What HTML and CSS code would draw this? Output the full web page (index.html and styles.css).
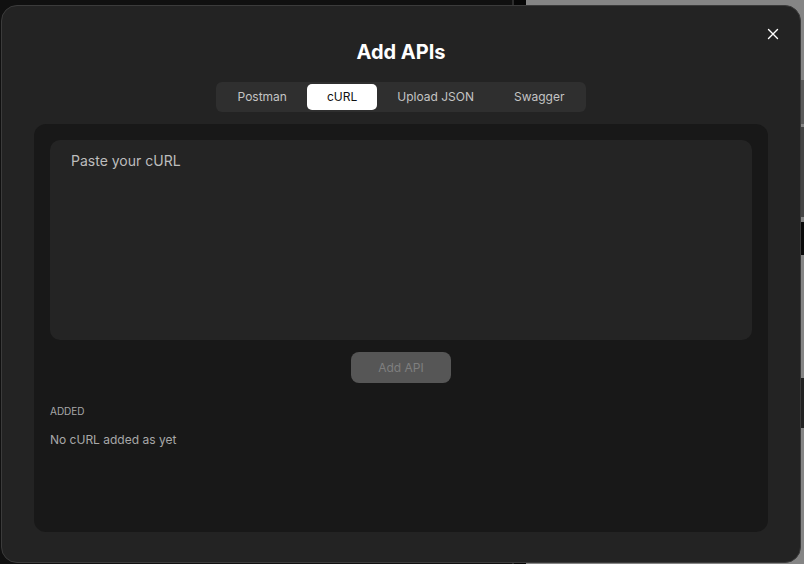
FILE: index.html
```html
<!DOCTYPE html>
<html>
<head>
<meta charset="utf-8">
<link rel="stylesheet" href="styles.css">
</head>
<body>
<div class="backdrop">
  <div class="bg-dark"></div>
  <div class="bg-line"></div>
  <div class="bg-black"></div>
  <div class="bg-grey">
    <div class="edge e1"></div>
    <div class="edge e2"></div>
    <div class="edge e3"></div>
    <div class="edge e4"></div>
  </div>
</div>
<div class="modal">
  <button class="close" aria-label="Close">
    <svg width="12" height="12" viewBox="0 0 12 12"><path d="M1.5 1.5 L10.5 10.5 M10.5 1.5 L1.5 10.5" stroke="#fff" stroke-width="1.4" stroke-linecap="round" fill="none"/></svg>
  </button>
  <h1 class="title">Add APIs</h1>
  <div class="tabs">
    <div class="tab">Postman</div>
    <div class="tab active">cURL</div>
    <div class="tab">Upload JSON</div>
    <div class="tab">Swagger</div>
  </div>
  <div class="panel">
    <div class="input">Paste your cURL</div>
    <div class="actions"><button class="add-btn">Add API</button></div>
    <div class="section-label">ADDED</div>
    <div class="empty">No cURL added as yet</div>
  </div>
</div>
</body>
</html>
```
FILE: styles.css
```css
html, body {
  margin: 0;
  padding: 0;
}
body {
  width: 804px;
  height: 564px;
  overflow: hidden;
  position: relative;
  font-family: Inter, "Noto Sans", sans-serif;
  background: #0e0e0e;
}
.backdrop {
  position: absolute;
  inset: 0;
  display: flex;
}
.bg-dark {
  width: 512px;
  background: #101010;
}
.bg-line {
  width: 2px;
  background: #2c2c2c;
}
.bg-black {
  width: 12px;
  background: #070707;
}
.bg-grey {
  flex: 1;
  background: #858585;
  position: relative;
}
.edge {
  position: absolute;
  right: 0;
  width: 4px;
  background: #2a2a2a;
}
.e1 { top: 80px; height: 44px; background: #5a5a5a; }
.e2 { top: 127px; height: 90px; background: #444; }
.e3 { top: 222px; height: 33px; background: #0a0a0a; }
.e4 { top: 378px; height: 50px; background: #222; }

.modal {
  position: relative;
  margin: 5px 0 0 1px;
  width: 800px;
  height: 558px;
  box-sizing: border-box;
  background: #232323;
  border: 1px solid #3b3b3b;
  border-radius: 16px;
  padding: 34px 32px 30px;
  display: flex;
  flex-direction: column;
  align-items: center;
}
.close {
  position: absolute;
  top: 22px;
  right: 21px;
  width: 12px;
  height: 12px;
  padding: 0;
  border: 0;
  background: none;
  display: flex;
}
.title {
  margin: 0;
  font-size: 20px;
  line-height: 24px;
  font-weight: 700;
  color: #fff;
}
.tabs {
  margin-top: 18px;
  display: flex;
  padding: 2px;
  background: #2f2f2f;
  border-radius: 6px;
}
.tab {
  padding: 0 20px;
  height: 26px;
  line-height: 26px;
  font-size: 12px;
  color: #c4c4c4;
  border-radius: 5px;
}
.tab.active {
  background: #fff;
  color: #111;
}
.panel {
  margin-top: 12px;
  align-self: stretch;
  flex: 1;
  background: #181818;
  border-radius: 12px;
  padding: 16px;
  display: flex;
  flex-direction: column;
}
.input {
  height: 200px;
  box-sizing: border-box;
  background: #242424;
  border-radius: 10px;
  padding: 11px 21px;
  font-size: 14px;
  line-height: 20px;
  color: #bdbdbd;
}
.actions {
  margin-top: 12px;
  display: flex;
  justify-content: center;
}
.add-btn {
  width: 100px;
  height: 31px;
  border: 0;
  border-radius: 8px;
  background: #565656;
  color: #7f7f7f;
  font-family: inherit;
  font-size: 12px;
  padding: 0;
}
.section-label {
  margin-top: 22px;
  font-size: 10px;
  line-height: 12px;
  color: #a8a8a8;
}
.empty {
  margin-top: 15px;
  font-size: 12px;
  line-height: 16px;
  color: #a8a8a8;
}
```
